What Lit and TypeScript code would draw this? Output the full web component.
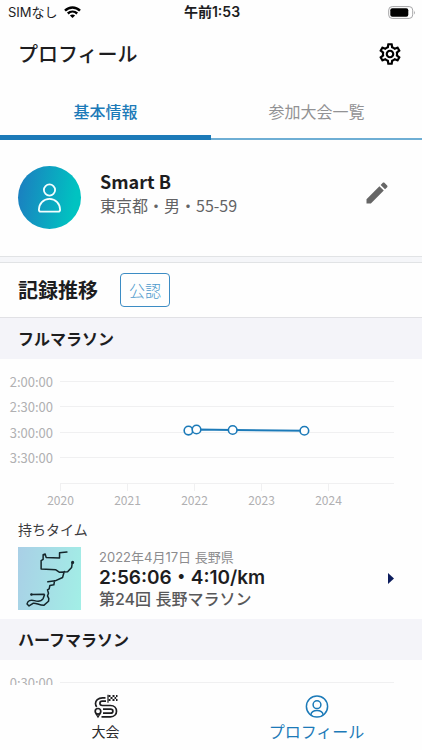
import { LitElement, html, svg, css } from "lit";
import { customElement, property, state } from "lit/decorators.js";
import { classMap } from "lit/directives/class-map.js";

interface RunPoint {
  year: number;
  minutes: number;
}

const FULL_RUNS: RunPoint[] = [
  { year: 2021.91, minutes: 177.4 },
  { year: 2022.03, minutes: 176.1 },
  { year: 2022.57, minutes: 176.7 },
  { year: 2023.64, minutes: 177.6 },
];

/** Line chart of finish times by year. */
@customElement("record-chart")
export class RecordChart extends LitElement {
  @property({ attribute: false }) times: string[] = [];
  @property({ attribute: false }) years: number[] = [];
  @property({ attribute: false }) runs: RunPoint[] = [];
  @property({ type: Number }) start = 120;

  static styles = css`
    :host {
      display: block;
    }
    .chart {
      display: block;
      width: 100%;
      height: auto;
      font-family: "Noto Sans CJK JP", sans-serif;
      fill: #b0b0b2;
    }
    .time {
      font-size: 13px;
      text-anchor: end;
    }
    .year {
      font-size: 12px;
      text-anchor: middle;
    }
    .grid {
      stroke: #f0f0f1;
      fill: none;
    }
    .line {
      stroke: #1c7ab8;
      stroke-width: 2;
      fill: none;
    }
    .dot {
      stroke: #1c7ab8;
      stroke-width: 1.6;
      fill: #fff;
    }
  `;

  private x(year: number) {
    return 60.5 + (year - 2020) * 67;
  }

  private y(minutes: number) {
    return 23 + ((minutes - this.start) / 30) * 25.4;
  }

  render() {
    const rows = this.times.map((t, i) => {
      const y = Math.round(this.y(this.start + i * 30)) - 0.5;
      return svg`<path class="grid" d="M60 ${y}H394"/>
        <text class="time" x="53" y=${y + 5}>${t}</text>`;
    });
    const cols = this.years.map(
      (n) => svg`<path class="grid" d="M${this.x(n)} 125V132"/>
        <text class="year" x=${this.x(n)} y="146">${n}</text>`
    );
    const points = this.runs.map((r) => `${this.x(r.year)},${this.y(r.minutes)}`).join(" ");
    return html`<svg class="chart" viewBox="0 0 422 157" role="img" aria-label="記録推移">
      ${rows}
      <path class="grid" d="M60 124.5H394" />
      ${cols}
      <polyline class="line" points=${points} />
      ${this.runs.map(
        (r) => svg`<circle class="dot" cx=${this.x(r.year)} cy=${this.y(r.minutes)} r="4.3"/>`
      )}
    </svg>`;
  }
}

@customElement("app-root")
export class AppRoot extends LitElement {
  @state() private tab = 0;

  static styles = css`
    :host {
      display: flex;
      flex-direction: column;
      height: 100vh;
      background: #fefefe;
      color: #1d1d1f;
      font-family: "Noto Sans CJK JP", sans-serif;
      font-size: 16px;
      line-height: 24px;
    }
    * {
      box-sizing: border-box;
    }
    svg {
      display: block;
      flex: none;
    }
    h1,
    h2,
    h3,
    p {
      margin: 0;
    }
    button {
      margin: 0;
      padding: 0;
      border: 0;
      background: none;
      color: inherit;
      font: inherit;
      cursor: pointer;
    }
    a {
      color: inherit;
      text-decoration: none;
    }
    .status {
      display: grid;
      grid-template-columns: 1fr auto 1fr;
      align-items: center;
      height: 24px;
      padding: 0 6px 0 8px;
      font-family: Inter, "Noto Sans CJK JP", sans-serif;
      font-size: 13px;
      flex: none;
    }
    .carrier {
      display: flex;
      align-items: center;
      gap: 6px;
    }
    .clock {
      font-size: 14px;
      font-weight: 600;
    }
    .battery {
      justify-self: end;
    }
    .header {
      display: flex;
      align-items: center;
      justify-content: space-between;
      height: 60px;
      padding: 0 19px 0 18px;
      flex: none;
    }
    .title {
      font-size: 20px;
      font-weight: 500;
    }
    .tabs {
      display: flex;
      height: 56px;
      flex: none;
    }
    .tab {
      flex: 1;
      border-bottom: 2px solid #6eaed4;
      color: #929294;
    }
    .tab.active {
      border-bottom: 5px solid #1c7ab8;
      padding-top: 3px;
      color: #1c7ab8;
      font-weight: 500;
    }
    .content {
      flex: 1;
      min-height: 0;
      overflow: hidden auto;
      scrollbar-width: none;
    }
    .profile {
      display: flex;
      align-items: flex-start;
      gap: 19px;
      padding: 26px 31px 27px 18px;
    }
    .avatar {
      border-radius: 50%;
      background: linear-gradient(100deg, #1b7fc0 5%, #00c3c1 85%);
    }
    .who {
      flex: 1;
      display: flex;
      align-items: center;
      justify-content: space-between;
      padding-top: 3px;
    }
    .name {
      font-size: 18px;
      font-weight: 700;
    }
    .meta {
      color: #636365;
    }
    .divider {
      height: 7px;
      border: solid #e1e3e5;
      border-width: 1px 0;
      background: #f5f6f9;
    }
    .records {
      display: flex;
      align-items: center;
      gap: 22px;
      height: 55px;
      padding: 0 18px;
      border-bottom: 1px solid #e1e1e5;
    }
    .heading {
      font-size: 20px;
      font-weight: 700;
    }
    .badge {
      height: 34px;
      padding: 0 8px;
      border: 1px solid #3c8cc4;
      border-radius: 4px;
      color: #4f9acc;
      font-weight: 300;
    }
    .section {
      height: 41px;
      padding: 0 18px;
      background: #f4f4f9;
      font-size: 16px;
      font-weight: 700;
      line-height: 41px;
    }
    .best {
      display: block;
      padding: 3px 28px 9px 18px;
    }
    .caption {
      font-size: 14px;
      line-height: 20px;
      padding-bottom: 8px;
      color: #3c3c3e;
    }
    .result {
      display: flex;
      align-items: center;
      gap: 18px;
      font-family: Inter, "Noto Sans CJK JP", sans-serif;
    }
    .course {
      background: linear-gradient(100deg, #a9cfe6, #a2efe6);
    }
    .facts {
      flex: 1;
    }
    .date {
      font-size: 13px;
      line-height: 20px;
      color: #8c8c8e;
    }
    .time {
      font-size: 19px;
      font-weight: 600;
      line-height: 22px;
    }
    .race {
      font-size: 16px;
      font-weight: 500;
      line-height: 21px;
      color: #58585a;
    }
    .nav {
      display: flex;
      height: 65px;
      flex: none;
      background: #fefefe;
    }
    .item {
      flex: 1;
      display: flex;
      flex-direction: column;
      align-items: center;
      padding-top: 9px;
      font-size: 14px;
      color: #2a2a2c;
    }
    .item.current {
      color: #1c7ab8;
      font-size: 16px;
    }
  `;

  private renderTab(label: string, index: number) {
    const active = this.tab === index;
    return html`<button
      class=${classMap({ tab: true, active })}
      role="tab"
      aria-selected=${active}
      @click=${() => (this.tab = index)}
    >
      ${label}
    </button>`;
  }

  render() {
    return html`
      <div class="status">
        <span class="carrier">
          <span>SIMなし</span>
          <svg width="17" height="12" viewBox="0 0 17 12" fill="none" stroke="#000" stroke-width="2.4">
            <path d="M1 4.6C5.2.4 11.8.4 16 4.6M3.8 7.5c2.7-2.5 6.7-2.5 9.4 0" />
            <path d="M8.5 12L5.9 9.4q2.6-2 5.2 0Z" fill="#000" stroke="none" />
          </svg>
        </span>
        <span class="clock">午前1:53</span>
        <svg class="battery" width="28" height="13" viewBox="0 0 28 13">
          <rect x=".7" y=".6" width="24" height="11.8" rx="3.5" fill="none" stroke="#a5a5a7" />
          <rect x="2.3" y="2.3" width="18" height="8.4" rx="2" />
          <path d="M26 4.5q1.6 2 0 4Z" fill="#a5a5a7" />
        </svg>
      </div>

      <header class="header">
        <h1 class="title">プロフィール</h1>
        <button aria-label="設定">
          <svg width="26" height="26" viewBox="0 0 24 24">
            <path
              d="M19.43 12.98c.04-.32.07-.64.07-.98 0-.34-.03-.66-.07-.98l2.11-1.65c.19-.15.24-.42.12-.64l-2-3.46c-.09-.16-.26-.25-.44-.25-.06 0-.12.01-.17.03l-2.49 1c-.52-.4-1.08-.73-1.69-.98l-.38-2.65C14.46 2.18 14.25 2 14 2h-4c-.25 0-.46.18-.49.42l-.38 2.65c-.61.25-1.17.59-1.69.98l-2.49-1c-.06-.02-.12-.03-.18-.03-.17 0-.34.09-.43.25l-2 3.46c-.13.22-.07.49.12.64l2.11 1.65c-.04.32-.07.65-.07.98 0 .33.03.66.07.98l-2.11 1.65c-.19.15-.24.42-.12.64l2 3.46c.09.16.26.25.44.25.06 0 .12-.01.17-.03l2.49-1c.52.4 1.08.73 1.69.98l.38 2.65c.03.24.24.42.49.42h4c.25 0 .46-.18.49-.42l.38-2.65c.61-.25 1.17-.59 1.69-.98l2.49 1c.06.02.12.03.18.03.17 0 .34-.09.43-.25l2-3.46c.12-.22.07-.49-.12-.64l-2.11-1.65zm-1.98-1.71c.04.31.05.52.05.73 0 .21-.02.43-.05.73l-.14 1.13.89.7 1.08.84-.7 1.21-1.27-.51-1.04-.42-.9.68c-.43.32-.84.56-1.25.73l-1.06.43-.16 1.13-.2 1.35h-1.4l-.19-1.35-.16-1.13-1.06-.43c-.43-.18-.83-.41-1.23-.71l-.91-.7-1.06.43-1.27.51-.7-1.21 1.08-.84.89-.7-.14-1.13c-.03-.31-.05-.54-.05-.74s.02-.43.05-.73l.14-1.13-.89-.7-1.08-.84.7-1.21 1.27.51 1.04.42.9-.68c.43-.32.84-.56 1.25-.73l1.06-.43.16-1.13.2-1.35h1.39l.19 1.35.16 1.13 1.06.43c.43.18.83.41 1.23.71l.91.7 1.06-.43 1.27-.51.7 1.21-1.07.85-.89.7.14 1.13zM12 8c-2.21 0-4 1.79-4 4s1.79 4 4 4 4-1.79 4-4-1.79-4-4-4zm0 6c-1.1 0-2-.9-2-2s.9-2 2-2 2 .9 2 2-.9 2-2 2z"
            />
          </svg>
        </button>
      </header>

      <div class="tabs" role="tablist">
        ${this.renderTab("基本情報", 0)} ${this.renderTab("参加大会一覧", 1)}
      </div>

      <main class="content">
        <section class="profile">
          <svg class="avatar" width="63" height="63" viewBox="0 0 63 63" fill="none" stroke="#f2ffff" stroke-width="1.8">
            <circle cx="31.5" cy="24" r="5.6" />
            <path d="M31.5 32.800c6.200 0 10.600 5 10.600 11 0 1.200-.6 1.900-1.800 1.900H22.700c-1.200 0-1.800-.7-1.800-1.900 0-6 4.400-11 10.600-11Z" />
          </svg>
          <div class="who">
            <div>
              <h2 class="name">Smart B</h2>
              <p class="meta">東京都・男・55-59</p>
            </div>
            <button aria-label="編集">
              <svg width="28" height="28" viewBox="0 0 24 24" fill="#666">
                <path
                  d="M3 17.25V21h3.75L17.81 9.94l-3.75-3.75L3 17.25zM20.71 7.04c.39-.39.39-1.02 0-1.41l-2.34-2.34c-.39-.39-1.02-.39-1.41 0l-1.83 1.83 3.75 3.75 1.83-1.83z"
                />
              </svg>
            </button>
          </div>
        </section>

        <div class="divider"></div>

        <div class="records">
          <h2 class="heading">記録推移</h2>
          <button class="badge">公認</button>
        </div>

        <h3 class="section">フルマラソン</h3>
        <record-chart
          .times=${["2:00:00", "2:30:00", "3:00:00", "3:30:00"]}
          .years=${[2020, 2021, 2022, 2023, 2024]}
          .runs=${FULL_RUNS}
        ></record-chart>
        <a class="best" href="#result">
          <p class="caption">持ちタイム</p>
          <div class="result">
            <svg class="course" width="63" height="63" viewBox="0 0 188 188" fill="none" stroke="#15262b" stroke-width="4.5" stroke-linejoin="round" stroke-linecap="round">
              <path
                d="M146 15l-22 2v16l-40-2-3-10-6 2v14l-6 4v25l44 2 10 7 25-1 12-13 2-14M138 73l-5 18-22 10-22 3M109 101l-2 12-12 2-2 10-5 3 3 10-3 8 4 8-1 8-14 12c-15 0-22-8-32-6l-12 8-6-6c2-10 10-13 22-10 12 4 22 0 26-6l4-11M78 141l-38 1"
              />
              <circle cx="163" cy="46" r="2.5" fill="#15262b" />
              <circle cx="40" cy="142" r="1.5" fill="#15262b" />
            </svg>
            <div class="facts">
              <p class="date">2022年4月17日 長野県</p>
              <p class="time">2:56:06・4:10/km</p>
              <p class="race">第24回 長野マラソン</p>
            </div>
            <svg width="6" height="11" viewBox="0 0 6 11" fill="#0c1c5c"><path d="M0 0l6 5.5L0 11Z" /></svg>
          </div>
        </a>

        <h3 class="section">ハーフマラソン</h3>
        <record-chart .times=${["0:30:00"]}></record-chart>
      </main>

      <nav class="nav">
        <a class="item" href="#races">
          <svg width="24" height="25" viewBox="0 0 24 25" fill="none" stroke="#1d1d1f" stroke-width="1.7">
            <path d="M11.5 3.8H8.5C4 3.8 1.5 6.500 1.500 9.500c0 1.500.4 2.500 1.300 3.300" />
            <path d="M12 7.2H8.300c-3.200 0-3.200 4.300 0 4.300h8.200c8 0 8 11.300 0 11.300H7.500" />
            <path d="M9 15.2h7.500c3.200 0 3.200 4 0 4H9" />
            <circle cx="4" cy="17.3" r="2.8" />
            <path d="M1.800 19.500L4 23l2.200-3.500" stroke-width="1.400" />
            <path d="M14 .8v8" stroke-width="1.2" />
            <path
              d="M14.500 1h2v2h-2zM18.500 1h2v2h-2zM22 1h1.500v2H22zM16.500 3h2v2h-2zM20.500 3h1.700v2h-1.700zM14.500 5h2v2h-2zM18.500 5h2v2h-2zM22 5h1.500v2H22z"
              fill="#1d1d1f"
              stroke="none"
            />
          </svg>
          <span>大会</span>
        </a>
        <a class="item current" href="#profile" aria-current="page">
          <svg width="24" height="25" viewBox="0 0 24 25" fill="none" stroke="currentColor" stroke-width="1.5">
            <circle cx="12" cy="12.5" r="10.6" />
            <circle cx="12" cy="10.7" r="3.9" />
            <path d="M5.8 20.8c.6-3.200 3-4.300 6.200-4.300s5.600 1.100 6.200 4.300" />
          </svg>
          <span>プロフィール</span>
        </a>
      </nav>
    `;
  }
}
